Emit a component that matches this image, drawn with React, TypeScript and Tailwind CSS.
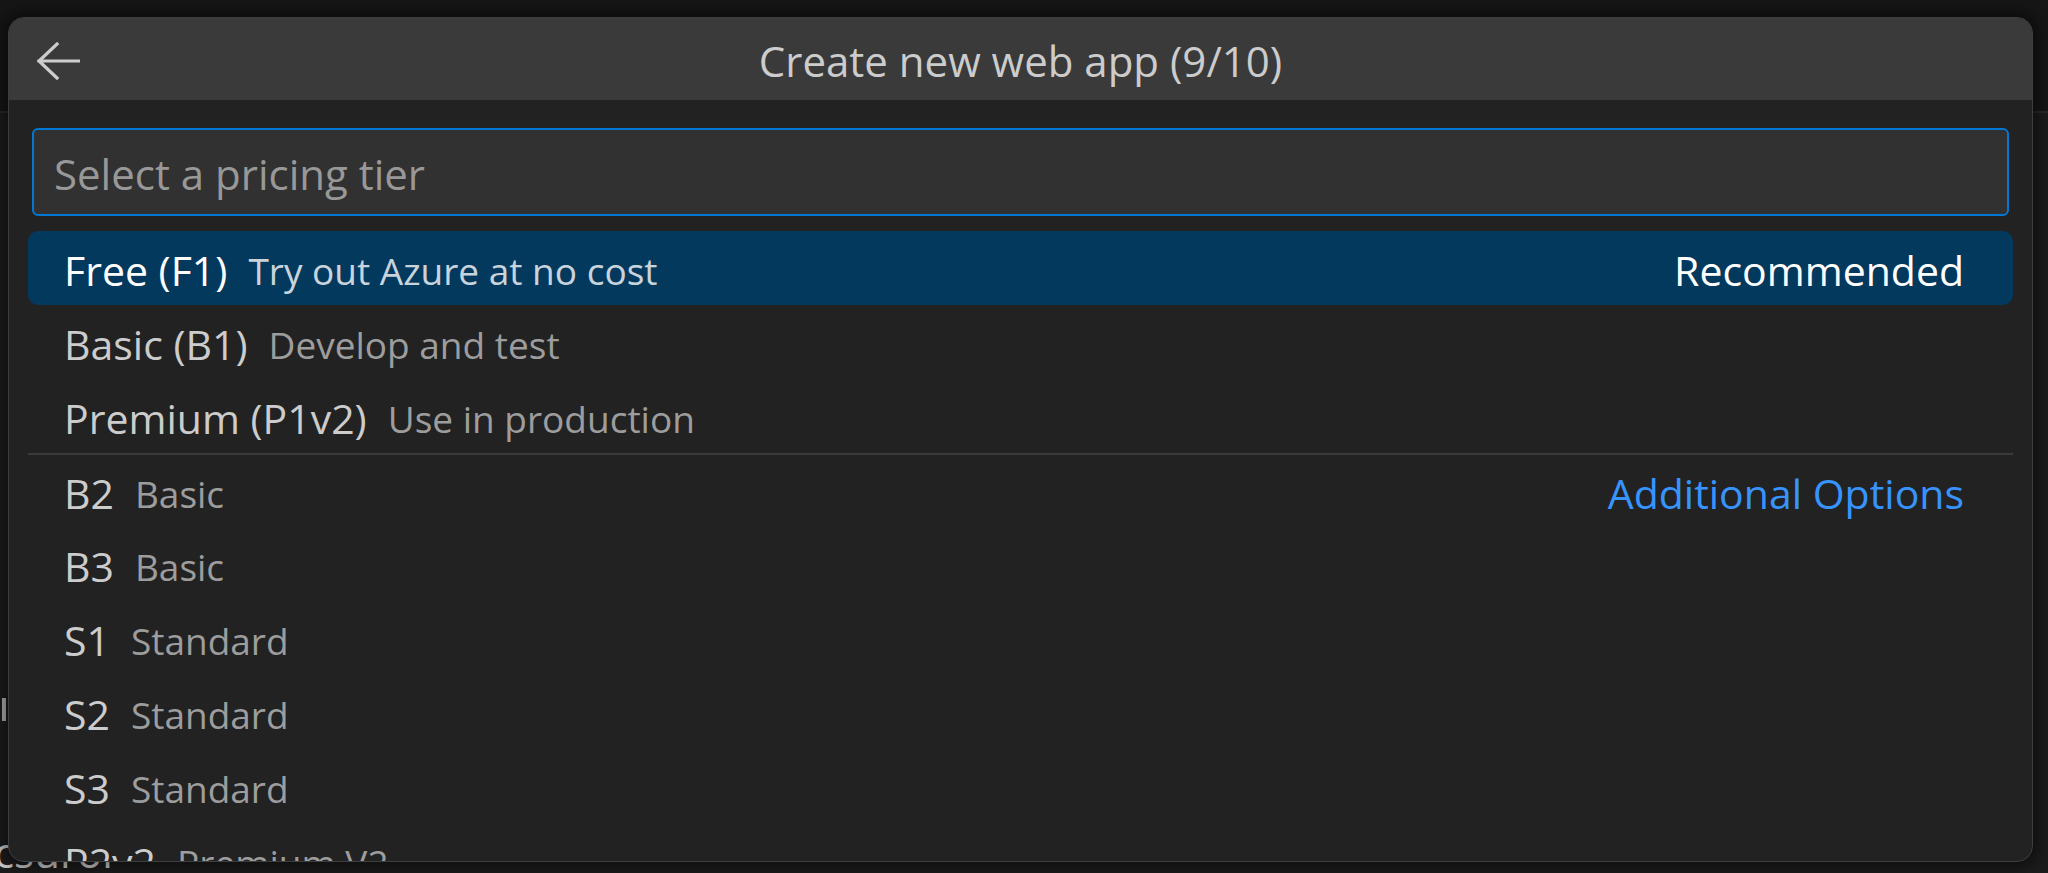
type Tier = {
    label: string;
    description: string;
    right?: string;
    selected?: boolean;
    separator?: boolean;
};

const tiers: Tier[] = [
    { label: "Free (F1)", description: "Try out Azure at no cost", right: "Recommended", selected: true },
    { label: "Basic (B1)", description: "Develop and test" },
    { label: "Premium (P1v2)", description: "Use in production" },
    { label: "B2", description: "Basic", right: "Additional Options", separator: true },
    { label: "B3", description: "Basic" },
    { label: "S1", description: "Standard" },
    { label: "S2", description: "Standard" },
    { label: "S3", description: "Standard" },
    { label: "P2v2", description: "Premium V2" },
    { label: "P3v2", description: "Premium V2" },
];

const font = { fontFamily: '"Open Sans", "Noto Sans", sans-serif' };

const BackArrow = () => (
    <svg width="44" height="38" viewBox="0 0 44 38" fill="none">
        <path
            d="M21 2 L3 19 L21 36 M3 19 H43"
            stroke="#cccccc"
            strokeWidth="3.2"
            strokeLinecap="square"
        />
    </svg>
);

const TierRow = ({ tier }: { tier: Tier }) => {
    return (
        <div
            className={`flex h-[74px] shrink-0 items-center rounded-[10px] pl-[36px] pr-[49px] pt-[4px] ${
                tier.selected ? "bg-[#04395e]" : ""
            } ${tier.separator ? "rounded-none border-t-2 border-[#3a3a3a]" : ""}`}
        >
            <span
                className={`text-[41px] leading-none ${
                    tier.selected ? "text-white" : "text-[#cccccc]"
                }`}
            >
                {tier.label}
            </span>
            <span
                className={`ml-[21px] text-[37px] leading-none ${
                    tier.selected ? "text-[#c9d3dc]" : "text-[#9d9d9d]"
                }`}
            >
                {tier.description}
            </span>
            {tier.right && (
                <span
                    className={`ml-auto text-[41px] leading-none ${
                        tier.selected ? "text-white" : "text-[#3794ff]"
                    }`}
                >
                    {tier.right}
                </span>
            )}
        </div>
    );
};

const App = () => {
    return (
        <div className="relative h-[873px] w-[2048px] overflow-hidden bg-[#161616]" style={font}>
            {/* editor behind the quick pick */}
            <div className="h-[113px] border-b-2 border-[#2a2a2a] bg-[#161616]" />
            <div className="flex h-[760px] flex-col bg-[#1c1c1c]">
                <div className="ml-[2px] mt-[585px] h-[32px] w-[4px] bg-[#b5b5b5]" />
                <div className="ml-[-6px] mt-[110px] text-[42px] leading-none text-[#cccccc]">csurol</div>
            </div>

            {/* quick input widget */}
            <div className="absolute left-[8px] top-[17px] flex h-[845px] w-[2025px] flex-col overflow-hidden rounded-[16px] border border-[#3e3e3e] bg-[#222222] shadow-[0_0_14px_6px_rgba(0,0,0,0.45)]">
                <div className="grid h-[82px] shrink-0 grid-cols-[1fr_auto_1fr] items-center bg-[#3a3a3a]">
                    <div className="flex pl-[27px] pt-[3px]">
                        <BackArrow />
                    </div>
                    <div className="pt-[4px] text-[42px] leading-none text-[#cccccc]">
                        Create new web app (9/10)
                    </div>
                    <div />
                </div>

                <div className="shrink-0 px-[23px] pt-[28px]">
                    <div className="flex h-[88px] items-center rounded-[6px] border-2 border-[#0078d4] bg-[#313131] pl-[20px] pt-[3px]">
                        <span className="text-[42px] leading-none text-[#989898]">
                            Select a pricing tier
                        </span>
                    </div>
                </div>

                <div className="mt-[15px] flex flex-col px-[19px]">
                    {tiers.map((tier) => (
                        <TierRow key={tier.label} tier={tier} />
                    ))}
                </div>
            </div>
        </div>
    );
};

export default App;
